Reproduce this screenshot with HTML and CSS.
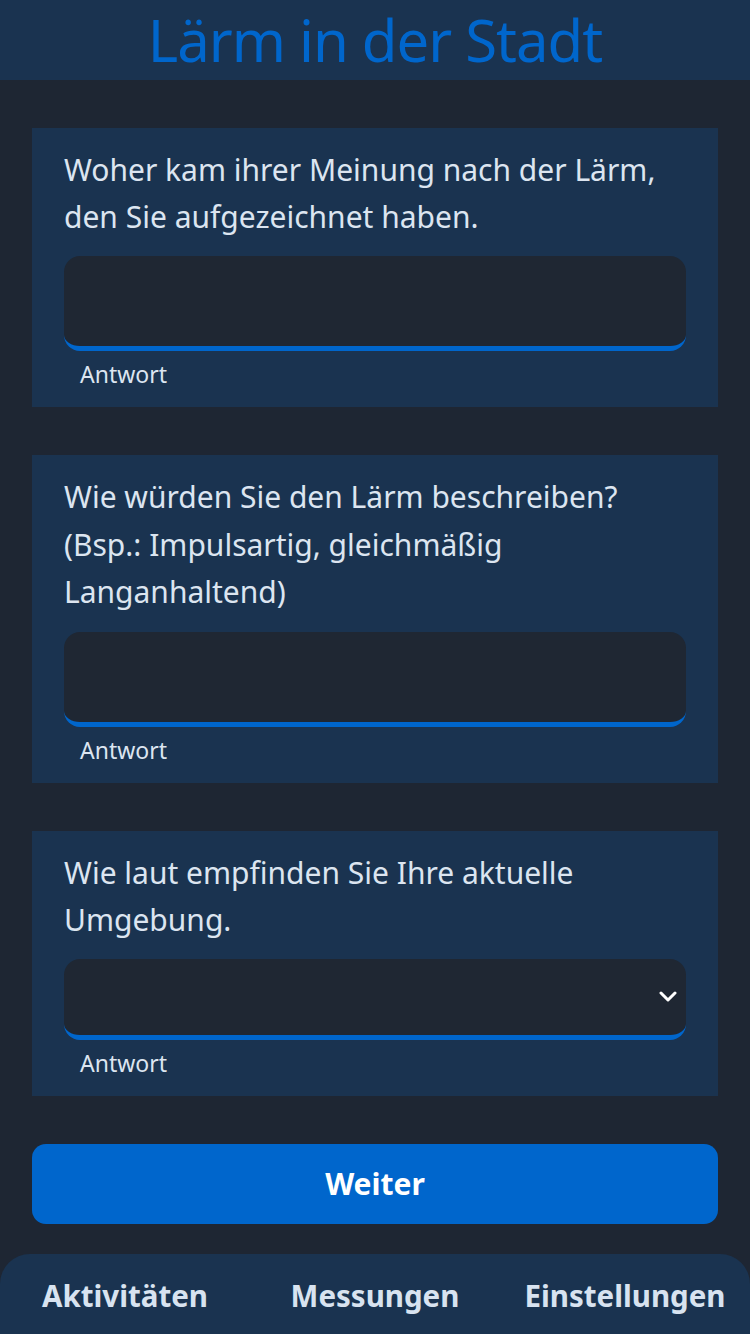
FILE: index.html
```html
<!DOCTYPE html>
<html lang="de">
<head>
<meta charset="utf-8">
<title>Lärm in der Stadt</title>
<link rel="stylesheet" href="styles.css">
</head>
<body>
<header class="topbar">
  <h1 class="title">Lärm in der Stadt</h1>
</header>
<main class="content">
  <section class="card">
    <p class="question">Woher kam ihrer Meinung nach der Lärm, den Sie aufgezeichnet haben.</p>
    <div class="field field-text"></div>
    <div class="hint">Antwort</div>
  </section>
  <section class="card card-tall">
    <p class="question">Wie würden Sie den Lärm beschreiben? (Bsp.: Impulsartig, gleichmäßig Langanhaltend)</p>
    <div class="field field-text"></div>
    <div class="hint">Antwort</div>
  </section>
  <section class="card">
    <p class="question">Wie laut empfinden Sie Ihre aktuelle Umgebung.</p>
    <div class="field field-select">
      <svg class="chevron" width="18" height="12" viewBox="0 0 18 12"><path d="M2 2 L9 9 L16 2" fill="none" stroke="#ffffff" stroke-width="3" stroke-linecap="round" stroke-linejoin="round"/></svg>
    </div>
    <div class="hint">Antwort</div>
  </section>
  <button class="next">Weiter</button>
</main>
<nav class="tabbar">
  <span class="tab">Aktivitäten</span>
  <span class="tab">Messungen</span>
  <span class="tab">Einstellungen</span>
</nav>
</body>
</html>
```

FILE: styles.css
```css
* { box-sizing: border-box; }
html, body { margin: 0; padding: 0; }
body {
  width: 750px;
  height: 1334px;
  background: #1e2633;
  font-family: "Noto Sans", "Open Sans", sans-serif;
  color: #dce5f0;
  display: flex;
  flex-direction: column;
  overflow: hidden;
}
.topbar {
  height: 80px;
  flex: none;
  background: #1a3350;
  display: flex;
  align-items: center;
  justify-content: center;
}
.title {
  margin: 0;
  font-size: 58px;
  font-weight: 400;
  line-height: 80px;
  color: #0066cc;
  letter-spacing: -1px;
}
.content {
  padding: 48px 32px 0;
  display: flex;
  flex-direction: column;
  gap: 48px;
}
.card {
  background: #1a3350;
  padding: 18px 32px 18px;
  display: flex;
  flex-direction: column;
}
.question {
  margin: 0 0 16px;
  font-size: 30px;
  line-height: 47px;
}
.card-tall .question { line-height: 47.5px; }
.field {
  background: #1f2733;
  border-radius: 16px;
  border-bottom: 5px solid #0066cc;
}
.field-text { height: 95px; }
.field-select {
  height: 81px;
  display: flex;
  align-items: center;
  justify-content: flex-end;
  padding-right: 9px;
}
.chevron { display: block; }
.hint {
  margin-top: 8px;
  padding-left: 16px;
  font-size: 23px;
  line-height: 30px;
}
.next {
  height: 80px;
  border: 0;
  border-radius: 14px;
  background: #0066cc;
  color: #ffffff;
  font-family: "Noto Sans", "Open Sans", sans-serif;
  font-size: 30px;
  font-weight: 700;
}
.tabbar {
  margin-top: auto;
  flex: none;
  height: 80px;
  background: #1a3350;
  border-radius: 30px 30px 0 0;
  display: grid;
  grid-template-columns: 1fr 1fr 1fr;
  align-items: center;
}
.tab {
  text-align: center;
  font-size: 29.5px;
  font-weight: 700;
  color: #d8e3f0;
  padding-top: 2px;
}
```
